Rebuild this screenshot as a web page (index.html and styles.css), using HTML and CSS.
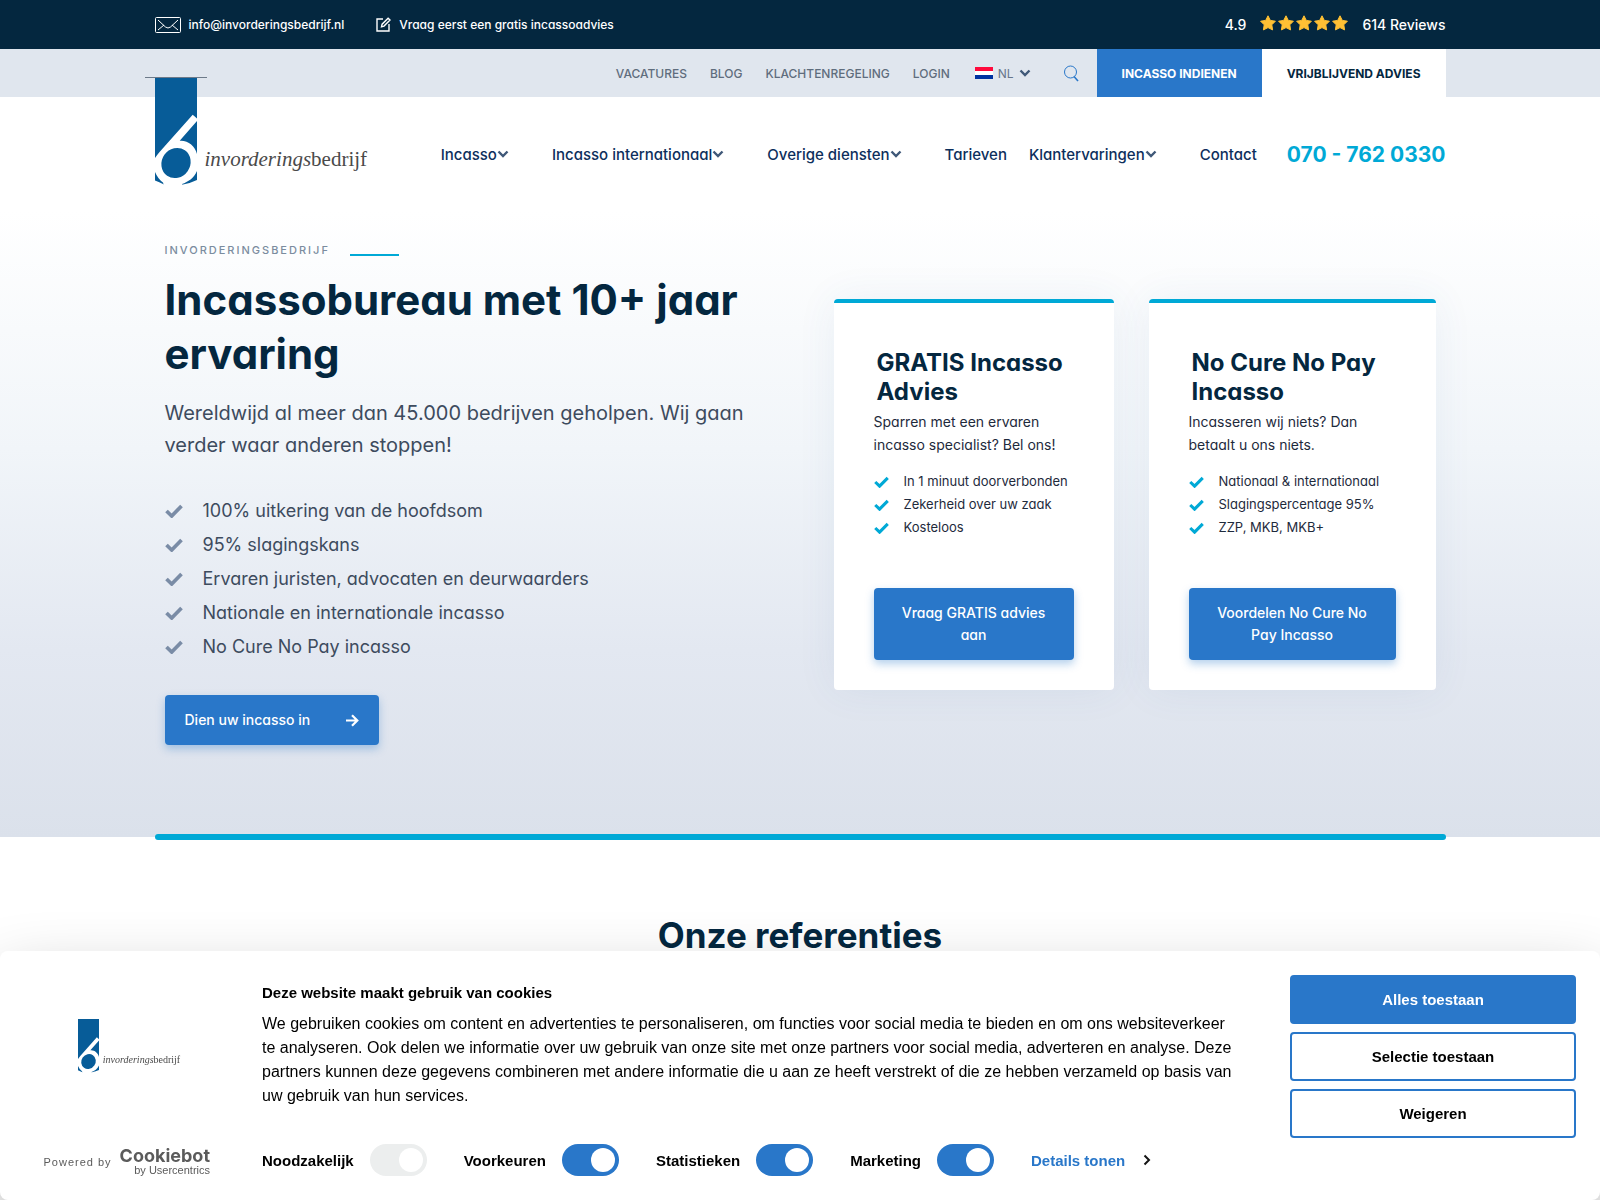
FILE: index.html
```html
<!DOCTYPE html>
<html lang="nl">
<head>
<meta charset="utf-8">
<meta name="viewport" content="width=device-width, initial-scale=1">
<title>Incassobureau met 10+ jaar ervaring | Invorderingsbedrijf</title>
<link rel="stylesheet" href="styles.css">
</head>
<body>
<svg width="0" height="0" class="sprite" aria-hidden="true">
  <symbol id="check" viewBox="0 0 18 14"><path d="M1.500 7 6.700 12 16.500 2" fill="none" stroke="currentColor" stroke-width="3.700"/></symbol>
  <symbol id="chevron" viewBox="0 0 12 8"><path d="M1.500 1.500 6 6l4.500-4.500" fill="none" stroke="currentColor" stroke-width="2.400"/></symbol>
  <symbol id="star" viewBox="0 0 16 16"><path d="M8 .8l2.300 4.600 5.100.8-3.600 3.600.8 5.100L8 12.600l-4.600 2.300.8-5.100L.6 6.200l5.100-.8z" fill="#ffc034" stroke="#ffc034" stroke-linejoin="round"/></symbol>
  <symbol id="logo-mark" viewBox="0 0 42 108">
    <path d="M0 0h42v102q-6 3-14 4.500H9Q4 104 0 102.500z" fill="#075c98"/>
    <path d="M37.700 36.700 42 40.500V43L24.700 62.700C33 62 40 68 42 76V93C39 100 33 104 27 106L27 108H9L8 104.500Q3 101 0 94V80Q2 77 5 73.500Z" fill="#fff"/>
    <ellipse cx="21" cy="85" rx="14.200" ry="15.500" fill="#075c98" transform="rotate(35 21 85)"/>
  </symbol>
</svg>

<div class="topbar">
  <div class="container topbar-row">
    <a class="topbar-link" href="#mail">
      <svg width="26" height="16" viewBox="0 0 26 16" fill="none" stroke="currentColor"><rect x=".5" y=".5" width="25" height="15" rx="1"/><path d="M3 3l7.500 7q2.500 2 5 0L23 3M3 13l6-5M23 13l-6-5"/></svg>
      info@invorderingsbedrijf.nl</a>
    <a class="topbar-link" href="#advies">
      <svg width="15" height="15" viewBox="0 0 15 15" fill="none" stroke="currentColor" stroke-width="1.400"><path d="M7 2H1v12h12V7M5.500 9.800l.6-2.600 6-6 1.900 1.900-6 6z"/></svg>
      Vraag eerst een gratis incassoadvies</a>
    <div class="rating">
      <span>4.9</span>
      <span class="stars" role="img" aria-label="5 sterren"><svg><use href="#star"/></svg><svg><use href="#star"/></svg><svg><use href="#star"/></svg><svg><use href="#star"/></svg><svg><use href="#star"/></svg></span>
      <span>614 Reviews</span>
    </div>
  </div>
</div>

<header>
  <div class="utility">
    <div class="container utility-row">
      <nav class="utility-nav">
        <a href="#vacatures">VACATURES</a>
        <a href="#blog">BLOG</a>
        <a href="#klachten">KLACHTENREGELING</a>
        <a href="#login">LOGIN</a>
      </nav>
      <button class="lang" type="button">
        <svg width="18" height="12" viewBox="0 0 18 12"><path fill="#fff" d="M0 0h18v12H0z"/><path fill="#ff0a3c" d="M0 0h18v4H0z"/><path fill="#0032a0" d="M0 8h18v4H0z"/></svg>
        NL
        <svg class="chevron" aria-hidden="true"><use href="#chevron"/></svg>
      </button>
      <button class="search" type="button" aria-label="Zoeken">
        <svg width="16" height="17" viewBox="0 0 16 17" fill="none" stroke="#2977c9"><circle cx="7.500" cy="7" r="6"/><path d="m11 11.500 4 4.500" stroke-width="1.600"/></svg>
      </button>
      <a class="tab tab-blue" href="#indienen">INCASSO INDIENEN</a>
      <a class="tab tab-white" href="#vrijblijvend">VRIJBLIJVEND ADVIES</a>
    </div>
  </div>
  <div class="container masthead">
    <a class="logo" href="#home">
      <svg class="logo-mark" aria-hidden="true"><use href="#logo-mark"/></svg>
      <span class="logo-text"><i>invorderings</i>bedrijf</span>
    </a>
    <nav class="main-nav">
      <a class="has-menu" href="#incasso">Incasso<svg class="chevron"><use href="#chevron"/></svg></a>
      <a class="has-menu" href="#internationaal">Incasso internationaal<svg class="chevron"><use href="#chevron"/></svg></a>
      <a class="has-menu" href="#diensten">Overige diensten<svg class="chevron"><use href="#chevron"/></svg></a>
      <a href="#tarieven">Tarieven</a>
      <a class="has-menu" href="#ervaringen">Klantervaringen<svg class="chevron"><use href="#chevron"/></svg></a>
      <a href="#contact">Contact</a>
      <a class="phone" href="tel:0707620330">070 - 762 0330</a>
    </nav>
  </div>
</header>

<main>
  <section class="hero">
    <div class="container hero-grid">
      <div class="intro">
        <p class="eyebrow">INVORDERINGSBEDRIJF</p>
        <h1>Incassobureau met 10+ jaar ervaring</h1>
        <p class="lead">Wereldwijd al meer dan 45.000 bedrijven geholpen. Wij gaan verder waar anderen stoppen!</p>
        <ul class="usps">
          <li><svg><use href="#check"/></svg>100% uitkering van de hoofdsom</li>
          <li><svg><use href="#check"/></svg>95% slagingskans</li>
          <li><svg><use href="#check"/></svg>Ervaren juristen, advocaten en deurwaarders</li>
          <li><svg><use href="#check"/></svg>Nationale en internationale incasso</li>
          <li><svg><use href="#check"/></svg>No Cure No Pay incasso</li>
        </ul>
        <a class="btn btn-main" href="#dien-in">Dien uw incasso in
          <svg width="13" height="13" viewBox="0 0 13 13" fill="none" stroke="currentColor" stroke-width="2.200"><path d="M0 6.500h11M6 1.200l5.300 5.300L6 11.800"/></svg></a>
      </div>
      <div class="cards">
        <article class="card">
          <h2>GRATIS Incasso Advies</h2>
          <p>Sparren met een ervaren incasso specialist? Bel ons!</p>
          <ul>
            <li><svg><use href="#check"/></svg>In 1 minuut doorverbonden</li>
            <li><svg><use href="#check"/></svg>Zekerheid over uw zaak</li>
            <li><svg><use href="#check"/></svg>Kosteloos</li>
          </ul>
          <a class="btn btn-card" href="#gratis">Vraag GRATIS advies aan</a>
        </article>
        <article class="card">
          <h2>No Cure No Pay Incasso</h2>
          <p>Incasseren wij niets? Dan betaalt u ons niets.</p>
          <ul>
            <li><svg><use href="#check"/></svg>Nationaal &amp; internationaal</li>
            <li><svg><use href="#check"/></svg>Slagingspercentage 95%</li>
            <li><svg><use href="#check"/></svg>ZZP, MKB, MKB+</li>
          </ul>
          <a class="btn btn-card" href="#voordelen">Voordelen No Cure No Pay Incasso</a>
        </article>
      </div>
    </div>
  </section>
  <section class="references container">
    <h2>Onze referenties</h2>
  </section>
</main>

<div class="cookies" role="dialog" aria-labelledby="cookie-title">
  <div class="cookie-brand">
    <span class="cookie-logo">
      <svg class="logo-mark" aria-hidden="true"><use href="#logo-mark"/></svg>
      <span class="logo-text"><i>invorderings</i>bedrijf</span>
    </span>
    <a class="powered" href="#cookiebot">
      <span class="powered-by">Powered by</span>
      <span class="cookiebot"><b>Cookiebot</b><small>by Usercentrics</small></span>
    </a>
  </div>
  <div class="cookie-body">
    <h2 id="cookie-title">Deze website maakt gebruik van cookies</h2>
    <p>We gebruiken cookies om content en advertenties te personaliseren, om functies voor social media te bieden en om ons websiteverkeer te analyseren. Ook delen we informatie over uw gebruik van onze site met onze partners voor social media, adverteren en analyse. Deze partners kunnen deze gegevens combineren met andere informatie die u aan ze heeft verstrekt of die ze hebben verzameld op basis van uw gebruik van hun services.</p>
    <div class="consent">
      <label>Noodzakelijk <input type="checkbox" checked disabled></label>
      <label>Voorkeuren <input type="checkbox" checked></label>
      <label>Statistieken <input type="checkbox" checked></label>
      <label>Marketing <input type="checkbox" checked></label>
      <a href="#details">Details tonen <svg width="8" height="12" viewBox="0 0 8 12" fill="none" stroke="#141414" stroke-width="2"><path d="m1.500 1.500 4.500 4.500-4.500 4.500"/></svg></a>
    </div>
  </div>
  <div class="cookie-actions">
    <button class="primary" type="button">Alles toestaan</button>
    <button type="button">Selectie toestaan</button>
    <button type="button">Weigeren</button>
  </div>
</div>
</body>
</html>
```
FILE: styles.css
```css
* { box-sizing: border-box; }

body {
  margin: 0;
  background: #fff;
  color: #04273f;
  font-family: Inter, "Open Sans", sans-serif;
  font-feature-settings: "cv11";
}

a { color: inherit; text-decoration: none; }
h1, h2, p, ul { margin: 0; padding: 0; }
ul { list-style: none; }
svg { flex: none; }
button { font: inherit; cursor: pointer; }
.sprite { position: absolute; }

.container {
  width: calc(100% - 32px);
  max-width: 1291px;
  margin: 0 auto;
}

.chevron { width: 12px; height: 8px; color: #3f5878; }

/* Top bar */
.topbar { background: #04273f; color: #fff; }
.topbar-row {
  display: flex;
  align-items: center;
  gap: 32px;
  min-height: 49px;
  font-size: 12px;
  font-weight: 500;
}
.topbar-link { display: flex; align-items: center; gap: 8px; }
.rating { display: flex; align-items: center; gap: 14px; margin-left: auto; font-size: 14px; }
.stars { display: flex; gap: 2px; padding-bottom: 4px; }
.stars svg { width: 16px; height: 16px; }

/* Utility bar */
.utility { background: #e0e6ee; }
.utility-row {
  display: flex;
  align-items: stretch;
  justify-content: flex-end;
  min-height: 48px;
  font-size: 12px;
}
.utility-nav {
  display: flex;
  align-items: center;
  gap: 23px;
  color: #5f6d7d;
  font-weight: 500;
}
.lang, .search {
  display: flex;
  align-items: center;
  border: 0;
  background: none;
  padding: 0;
}
.lang { gap: 5px; margin-left: 25px; color: #66758a; }
.search { padding: 0 18px 0 32px; }
.tab { display: flex; align-items: center; padding: 0 25px; font-weight: 700; }
.tab-blue { background: #2977c9; color: #fff; }
.tab-white { background: #fff; }

/* Logo and main menu */
.masthead {
  display: flex;
  align-items: center;
  justify-content: space-between;
  min-height: 114px;
}
.logo {
  display: flex;
  align-items: flex-end;
  align-self: flex-start;
  gap: 8px;
  margin: -20px 0 0 -10px;
  position: relative;
}
.logo::before {
  content: "";
  position: absolute;
  top: 0;
  left: 0;
  width: 62px;
  height: 1px;
  background: #6d7a89;
}
.logo .logo-mark { width: 42px; height: 108px; margin: 1px 0 0 10px; }
.logo-text { font-family: "Liberation Serif", serif; color: #4a4a4a; white-space: nowrap; }
.logo .logo-text { font-size: 21px; line-height: 24px; padding-bottom: 15px; }
.main-nav {
  display: flex;
  align-items: center;
  gap: 22px;
  font-size: 15px;
  font-weight: 500;
  color: #0d2f5c;
}
.has-menu { display: flex; align-items: center; padding-right: 21px; }
.phone { margin-left: 8px; font-size: 21px; font-weight: 700; color: #00a9d6; }

/* Hero */
.hero {
  background: linear-gradient(#fff, #f1f5f9 38%, #e3e8f1 70%, #dbe1eb);
  padding: 30px 0 92px;
  position: relative;
}
.hero::after {
  content: "";
  position: absolute;
  left: 0;
  right: 0;
  bottom: -3px;
  width: calc(100% - 32px);
  max-width: 1291px;
  height: 6px;
  margin: 0 auto;
  border-radius: 3px;
  background: #00a9d6;
}
.hero-grid {
  display: grid;
  grid-template-columns: minmax(0, 600px) minmax(0, 602px);
  justify-content: space-between;
  padding: 0 10px;
}
.eyebrow {
  display: flex;
  align-items: center;
  gap: 20px;
  font-size: 11px;
  line-height: 18px;
  font-weight: 500;
  letter-spacing: 2px;
  color: #7b8c9f;
}
.eyebrow::after { content: ""; width: 49px; height: 10px; border-bottom: 2px solid #00a9d6; }
h1 { margin-top: 14px; font-size: 42px; line-height: 54px; font-weight: 700; }
.lead { margin-top: 16px; font-size: 20px; line-height: 32px; color: #3d4b5e; }
.usps { margin-top: 33px; font-size: 18px; line-height: 34px; color: #3d4b5e; }
.usps li { display: flex; align-items: center; gap: 20px; }
.usps svg { width: 18px; height: 14px; color: #7a8ca6; }

.btn {
  display: inline-flex;
  align-items: center;
  justify-content: center;
  border-radius: 4px;
  background: #2977c9;
  color: #fff;
  font-size: 14px;
  line-height: 22px;
  font-weight: 500;
  text-align: center;
  box-shadow: 0 4px 8px rgba(41, 119, 201, .35);
}
.btn-main { gap: 36px; margin-top: 31px; padding: 14px 20px; }

.cards {
  display: grid;
  grid-template-columns: 280fr 287fr;
  gap: 35px;
  align-self: start;
  margin-top: 58px;
}
.card {
  display: flex;
  flex-direction: column;
  padding: 45px 40px 30px;
  border-top: 4px solid #00a9d6;
  border-radius: 4px;
  background: #fff;
  box-shadow: 0 0 40px rgba(60, 100, 150, .07);
  font-size: 14px;
  line-height: 23px;
  color: #1e2a3c;
}
.card h2 { padding: 0 0 4px 3px; font-size: 24px; line-height: 29px; color: #04273f; }
.card ul { margin-top: 14px; font-size: 13px; }
.card li { display: flex; align-items: center; gap: 15px; white-space: nowrap; }
.card li svg { width: 15px; height: 12px; color: #00a9d6; }
.btn-card { margin-top: 49px; padding: 14px 24px; }

/* References */
.references { padding: 75px 0 220px; text-align: center; }
.references h2 { font-size: 35px; line-height: 46px; }

/* Cookie dialog */
.cookies {
  position: fixed;
  left: 0;
  right: 0;
  bottom: 0;
  display: grid;
  grid-template-columns: 210px minmax(0, 1fr) 286px;
  column-gap: 28px;
  padding: 24px;
  border-radius: 8px;
  background: #fff;
  box-shadow: 0 32px 68px rgba(0, 0, 0, .3);
  color: #141414;
  font-family: "Liberation Sans", Arial, sans-serif;
  font-size: 15px;
}
.cookie-brand {
  display: flex;
  flex-direction: column;
  justify-content: space-between;
  align-items: flex-end;
  padding-top: 44px;
}
.cookie-logo { display: flex; align-items: flex-end; gap: 4px; align-self: center; }
.cookie-logo .logo-mark { width: 21px; height: 54px; }
.cookie-logo .logo-text { font-size: 10px; line-height: 12px; padding-bottom: 7px; }
.powered { display: flex; align-items: flex-end; gap: 8px; padding-right: 24px; color: #5b5b5b; }
.powered-by { font-size: 11px; line-height: 14px; letter-spacing: 1px; padding-bottom: 7px; }
.cookiebot { display: flex; flex-direction: column; align-items: flex-end; }
.cookiebot b { font-family: Inter, sans-serif; font-size: 18px; line-height: 18px; font-weight: 700; }
.cookiebot small { font-size: 11px; line-height: 11px; }

.cookie-body { padding: 6px 30px 0 0; }
.cookie-body h2 { font-size: 15px; line-height: 24px; color: #000; }
.cookie-body p { margin-top: 7px; font-size: 16px; line-height: 24px; color: #000; }
.consent {
  display: flex;
  align-items: center;
  flex-wrap: wrap;
  gap: 37px;
  margin-top: 36px;
  font-weight: 700;
  color: #000;
}
.consent label { display: flex; align-items: center; gap: 16px; }
.consent input {
  appearance: none;
  display: flex;
  justify-content: flex-end;
  width: 57px;
  height: 32px;
  margin: 0;
  padding: 4px;
  border-radius: 16px;
  background: #2977c9;
}
.consent input::before { content: ""; width: 24px; height: 24px; border-radius: 50%; background: #fff; }
.consent input:disabled { background: #eceeee; }
.consent a { display: flex; align-items: center; gap: 18px; color: #2977c9; }

.cookie-actions { display: flex; flex-direction: column; gap: 8px; }
.cookie-actions button {
  height: 49px;
  border: 2px solid #2977c9;
  border-radius: 4px;
  background: #fff;
  color: #000;
  font-weight: 700;
}
.cookie-actions .primary { background: #2977c9; color: #fff; }
```
